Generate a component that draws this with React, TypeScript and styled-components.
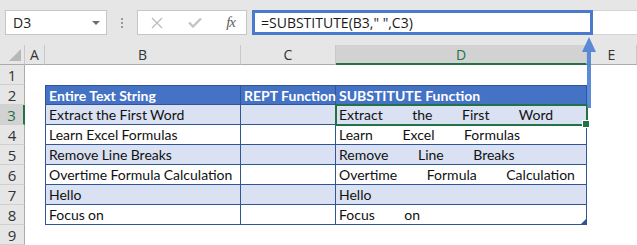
import React from 'react'
import styled, { createGlobalStyle, css } from 'styled-components'

const GlobalStyle = createGlobalStyle`
  html, body {
    margin: 0;
    padding: 0;
    background: #ffffff;
  }
  * {
    box-sizing: border-box;
  }
`

const Frame = styled.div`
  position: relative;
  width: 637px;
  height: 245px;
  overflow: hidden;
  font-family: Lato, 'Liberation Sans', sans-serif;
  background: #ffffff;
`

const Toolbar = styled.div`
  display: flex;
  align-items: center;
  height: 45px;
  padding: 0 0 0 5px;
  background: #e6e6e6;
`

const NameBox = styled.div`
  display: flex;
  align-items: center;
  justify-content: space-between;
  width: 102px;
  height: 25px;
  padding: 0 6px 0 7px;
  background: #ffffff;
  border: 1px solid #c6c6c6;
  font-family: 'Open Sans', 'Liberation Sans', sans-serif;
  font-size: 14px;
  color: #222;
`

const Caret = styled.span`
  width: 0;
  height: 0;
  border-left: 4px solid transparent;
  border-right: 4px solid transparent;
  border-top: 4px solid #6e6e6e;
`

const Grip = styled.div`
  display: flex;
  flex-direction: column;
  gap: 2px;
  width: 30px;
  align-items: center;
  span {
    width: 2px;
    height: 2px;
    background: #9a9a9a;
  }
`

const FxGroup = styled.div`
  display: flex;
  align-items: center;
  justify-content: space-between;
  width: 110px;
  height: 25px;
  padding: 0 11px 0 13px;
  background: #ffffff;
  border: 1px solid #c6c6c6;
`

const FxLabel = styled.span`
  font-family: 'Liberation Serif', serif;
  font-style: italic;
  font-size: 15px;
  color: #606060;
  letter-spacing: -1px;
`

const FormulaInput = styled.div`
  display: flex;
  align-items: center;
  width: 341px;
  height: 25px;
  margin-left: 5px;
  padding: 0 6px;
  background: #ffffff;
  border: 3px solid #4a7acb;
  font-family: 'Open Sans', 'Liberation Sans', sans-serif;
  font-size: 14px;
  color: #1a1a1a;
  white-space: pre;
`

const FormulaRest = styled.div`
  flex: 1;
  height: 25px;
  background: #ffffff;
  border-top: 1px solid #d4d4d4;
  border-bottom: 1px solid #d4d4d4;
`

const Sheet = styled.div`
  display: grid;
  grid-template-columns: 25px 20px 196px 95px 251px 1fr;
  grid-template-rows: 20px repeat(9, 20px);
`

const headerBase = css`
  display: flex;
  align-items: center;
  justify-content: center;
  background: #e6e6e6;
  font-family: 'Open Sans', 'Liberation Sans', sans-serif;
  font-size: 14px;
  color: #333;
`

const Corner = styled.div`
  ${headerBase};
  position: relative;
  border-right: 1px solid #c8c8c8;
  border-bottom: 1px solid #ababab;
  &::after {
    content: '';
    position: absolute;
    right: 3px;
    bottom: 3px;
    width: 0;
    height: 0;
    border-left: 12px solid transparent;
    border-bottom: 12px solid #b7b7b7;
  }
`

const ColHead = styled.div<{ $active?: boolean }>`
  ${headerBase};
  border-right: 1px solid #c8c8c8;
  border-bottom: 1px solid #ababab;
  ${(p) =>
    p.$active &&
    css`
      background: #d2d2d2;
      color: #217346;
      border-bottom: 2px solid #217346;
    `}
`

const RowHead = styled.div<{ $active?: boolean }>`
  ${headerBase};
  font-size: 15px;
  border-right: 1px solid #ababab;
  border-bottom: 1px solid #d0d0d0;
  ${(p) =>
    p.$active &&
    css`
      background: #d2d2d2;
      color: #217346;
      border-right: 2px solid #217346;
    `}
`

const Empty = styled.div``

const Cell = styled.div<{ $head?: boolean; $band?: boolean; $first?: boolean; $top?: boolean; $selected?: boolean; $last?: boolean }>`
  position: relative;
  display: flex;
  align-items: center;
  padding: 0 0 0 3px;
  font-size: 14px;
  word-spacing: -0.3px;
  color: #111;
  white-space: pre;
  overflow: visible;
  background: ${(p) => (p.$head ? '#4472c4' : p.$band ? '#d9e1f2' : '#ffffff')};
  border-right: 1px solid #2f5597;
  border-bottom: 1px solid #2f5597;
  ${(p) => p.$first && 'border-left: 1px solid #2f5597;'}
  ${(p) => p.$top && 'border-top: 1px solid #2f5597;'}
  ${(p) =>
    p.$head &&
    css`
      color: #ffffff;
      font-weight: 700;
      word-spacing: 0;
    `}
  ${(p) =>
    p.$selected &&
    css`
      z-index: 2;
      outline: 2px solid #217346;
      outline-offset: -1px;
      &::after {
        content: '';
        position: absolute;
        right: -4px;
        bottom: -4px;
        width: 6px;
        height: 6px;
        background: #217346;
        border: 1px solid #ffffff;
      }
    `}
  ${(p) =>
    p.$last &&
    css`
      &::after {
        content: '';
        position: absolute;
        right: 0;
        bottom: 0;
        width: 0;
        height: 0;
        border-left: 5px solid transparent;
        border-bottom: 5px solid #2f5597;
      }
    `}
`

const Arrow = styled.svg`
  position: absolute;
  left: 581px;
  top: 37px;
  z-index: 5;
`

const gap = '         '

const rows: [string, string][] = [
  ['Extract the First Word', `Extract${gap}the${gap}First${gap}Word`],
  ['Learn Excel Formulas', `Learn${gap}Excel${gap}Formulas`],
  ['Remove Line Breaks', `Remove${gap}Line${gap}Breaks`],
  ['Overtime Formula Calculation', `Overtime${gap}Formula${gap}Calculation`],
  ['Hello', 'Hello'],
  ['Focus on', `Focus${gap}on`],
]

export default function App() {
  return (
    <Frame>
      <GlobalStyle />
      <Toolbar>
        <NameBox>
          D3
          <Caret />
        </NameBox>
        <Grip>
          <span />
          <span />
          <span />
        </Grip>
        <FxGroup>
          <svg width="12" height="12" viewBox="0 0 12 12">
            <path d="M1 1 L11 11 M11 1 L1 11" stroke="#bdbdbd" strokeWidth="1.4" fill="none" />
          </svg>
          <svg width="14" height="11" viewBox="0 0 14 11">
            <path d="M1 5.5 L5 9.5 L13 1.5" stroke="#c4c4c4" strokeWidth="2.4" fill="none" />
          </svg>
          <FxLabel>fx</FxLabel>
        </FxGroup>
        <FormulaInput>=SUBSTITUTE(B3," ",C3)</FormulaInput>
        <FormulaRest />
      </Toolbar>
      <Sheet>
        <Corner />
        <ColHead>A</ColHead>
        <ColHead>B</ColHead>
        <ColHead>C</ColHead>
        <ColHead $active>D</ColHead>
        <ColHead>E</ColHead>

        <RowHead>1</RowHead>
        <Empty />
        <Empty />
        <Empty />
        <Empty />
        <Empty />

        <RowHead>2</RowHead>
        <Empty />
        <Cell $head $first $top>Entire Text String</Cell>
        <Cell $head $top>REPT Function</Cell>
        <Cell $head $top>SUBSTITUTE Function</Cell>
        <Empty />

        {rows.map(([text, result], i) => (
          <React.Fragment key={i}>
            <RowHead $active={i === 0}>{i + 3}</RowHead>
            <Empty />
            <Cell $band={i % 2 === 0} $first>
              {text}
            </Cell>
            <Cell $band={i % 2 === 0} />
            <Cell $band={i % 2 === 0} $selected={i === 0} $last={i === rows.length - 1}>
              {result}
            </Cell>
            <Empty />
          </React.Fragment>
        ))}

        <RowHead>9</RowHead>
        <Empty />
        <Empty />
        <Empty />
        <Empty />
        <Empty />
      </Sheet>
      <Arrow width="16" height="72" viewBox="0 0 16 72">
        <path d="M8 0 L15 15 L10 15 L10 71 L6 71 L6 15 L1 15 Z" fill="#4a7fd4" fillOpacity="0.9" />
      </Arrow>
    </Frame>
  )
}
